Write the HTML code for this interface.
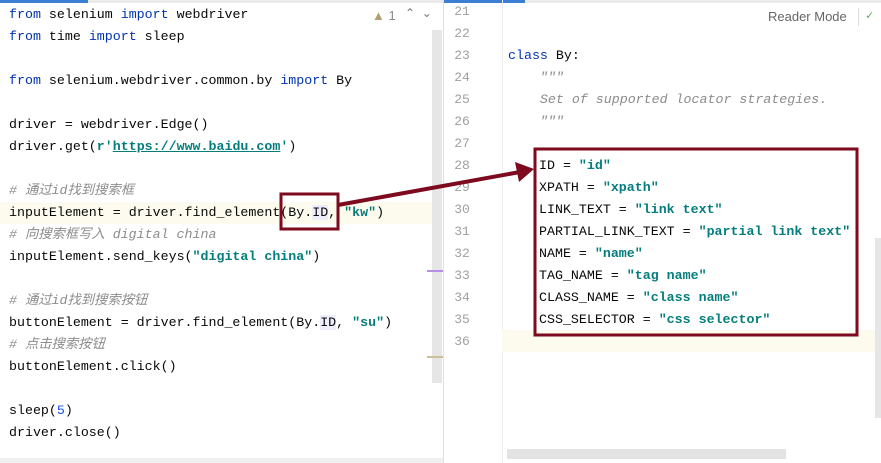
<!DOCTYPE html><html><head><style>
body{margin:0;width:881px;height:463px;overflow:hidden;background:#fff;font-family:"Liberation Mono",monospace;font-size:13.3px;color:#080808;position:relative}
.ln{position:absolute;left:0;height:22px;line-height:22px;white-space:pre}
.k{color:#0033b3}.s{color:#067d7d;font-weight:bold}.c{color:#8c8c8c;font-style:italic;font-family:"Liberation Mono","Noto Sans CJK SC",monospace}.u{color:#067d7d;text-decoration:underline;font-weight:bold}.n{color:#1750eb}
.hl{background:#ededfc}
.num{position:absolute;left:447px;width:30px;text-align:center;color:#a0a0a0;font-size:13px;line-height:22px}
.doc{color:#8c8c8c;font-style:italic}
</style></head><body>
<!-- left panel -->
<div style="position:absolute;left:0;top:0;width:88px;height:3px;background:#3b7fd4"></div>
<div style="position:absolute;left:88px;top:0;width:355px;height:3px;background:#ebebeb"></div>
<div style="position:absolute;left:0;top:202px;width:432px;height:22px;background:#fdfbee"></div>
<div style="position:absolute;left:432px;top:30px;width:10px;height:353px;background:#e6e6e6"></div>
<div style="position:absolute;left:443px;top:0;width:1px;height:463px;background:#e0e0e0"></div>
<div style="position:absolute;left:427px;top:270px;width:16px;height:2px;background:#b58fe6"></div>
<div style="position:absolute;left:427px;top:356px;width:16px;height:2px;background:#cbbf9a"></div>
<div style="position:absolute;left:372px;top:8px;color:#b0a070;font-family:'Liberation Sans';font-size:13px">▲ <span style="color:#888">1</span></div>
<div style="position:absolute;left:405px;top:6px;color:#777;font-family:'Liberation Sans';font-size:12px">⌃&nbsp;&nbsp;⌄</div>
<div style="position:absolute;left:0;top:458px;width:443px;height:5px;background:#f0f0f0"></div>
<div style="position:absolute;left:9px;top:4px">
<div class="ln" style="top:0"><span class="k">from</span> selenium <span class="k">import</span> webdriver</div>
<div class="ln" style="top:22px"><span class="k">from</span> time <span class="k">import</span> sleep</div>
<div class="ln" style="top:66px"><span class="k">from</span> selenium.webdriver.common.by <span class="k">import</span> By</div>
<div class="ln" style="top:110px">driver = webdriver.Edge()</div>
<div class="ln" style="top:132px">driver.get(<span class="s">r'</span><span class="u">https://www.baidu.com</span><span class="s">'</span>)</div>
<div class="ln c" style="top:176px"># 通过id找到搜索框</div>
<div class="ln" style="top:198px">inputElement = driver.find_element(By.<span class="hl">ID</span>, <span class="s">"kw"</span>)</div>
<div class="ln c" style="top:220px"># 向搜索框写入 digital china</div>
<div class="ln" style="top:242px">inputElement.send_keys(<span class="s">"digital china"</span>)</div>
<div class="ln c" style="top:286px"># 通过id找到搜索按钮</div>
<div class="ln" style="top:308px">buttonElement = driver.find_element(By.<span class="hl">ID</span>, <span class="s">"su"</span>)</div>
<div class="ln c" style="top:330px"># 点击搜索按钮</div>
<div class="ln" style="top:352px">buttonElement.click()</div>
<div class="ln" style="top:396px">sleep(<span class="n">5</span>)</div>
<div class="ln" style="top:418px">driver.close()</div>
</div>
<!-- right panel -->
<div style="position:absolute;left:444px;top:0;width:81px;height:3px;background:#3b7fd4"></div>
<div style="position:absolute;left:525px;top:0;width:356px;height:3px;background:#ebebeb"></div>
<div style="position:absolute;left:502px;top:0;width:1px;height:463px;background:#ececec"></div>
<div style="position:absolute;left:502px;top:330px;width:379px;height:22px;background:#fdfbee"></div>
<div style="position:absolute;left:507px;top:449px;width:279px;height:10px;background:#e3e3e3"></div>
<div style="position:absolute;left:875px;top:238px;width:6px;height:180px;background:#e6e6e6"></div>
<div style="position:absolute;left:768px;top:9px;color:#666;font-family:'Liberation Sans';font-size:13px">Reader Mode</div>
<div style="position:absolute;left:858px;top:8px;width:1px;height:18px;background:#ddd"></div>
<div style="position:absolute;left:866px;top:8px;color:#5aa85a;font-size:12px">✓</div>
<div class="num" style="top:1px">21</div><div class="num" style="top:23px">22</div><div class="num" style="top:45px">23</div><div class="num" style="top:67px">24</div><div class="num" style="top:89px">25</div><div class="num" style="top:111px">26</div><div class="num" style="top:133px">27</div><div class="num" style="top:155px">28</div><div class="num" style="top:177px">29</div><div class="num" style="top:199px">30</div><div class="num" style="top:221px">31</div><div class="num" style="top:243px">32</div><div class="num" style="top:265px">33</div><div class="num" style="top:287px">34</div><div class="num" style="top:309px">35</div><div class="num" style="top:331px">36</div>
<div style="position:absolute;left:508px;top:45px">
<div class="ln" style="top:0"><span class="k">class</span> By:</div>
<div class="ln doc" style="top:22px">    """</div>
<div class="ln doc" style="top:44px">    Set of supported locator strategies.</div>
<div class="ln doc" style="top:66px">    """</div>
</div>
<div style="position:absolute;left:539px;top:155px">
<div class="ln" style="top:0">ID = <span class="s">"id"</span></div>
<div class="ln" style="top:22px">XPATH = <span class="s">"xpath"</span></div>
<div class="ln" style="top:44px">LINK_TEXT = <span class="s">"link text"</span></div>
<div class="ln" style="top:66px">PARTIAL_LINK_TEXT = <span class="s">"partial link text"</span></div>
<div class="ln" style="top:88px">NAME = <span class="s">"name"</span></div>
<div class="ln" style="top:110px">TAG_NAME = <span class="s">"tag name"</span></div>
<div class="ln" style="top:132px">CLASS_NAME = <span class="s">"class name"</span></div>
<div class="ln" style="top:154px">CSS_SELECTOR = <span class="s">"css selector"</span></div>
</div>
<svg width="881" height="463" style="position:absolute;left:0;top:0">
<rect x="281" y="194" width="57" height="35" fill="none" stroke="#7d0a1e" stroke-width="3"/>
<rect x="535" y="149" width="322" height="186" fill="none" stroke="#7d0a1e" stroke-width="3"/>
<line x1="338" y1="205" x2="520" y2="172" stroke="#7d0a1e" stroke-width="4"/>
<polygon points="534,169 515,162 519,182" fill="#7d0a1e"/>
</svg>
</body></html>
